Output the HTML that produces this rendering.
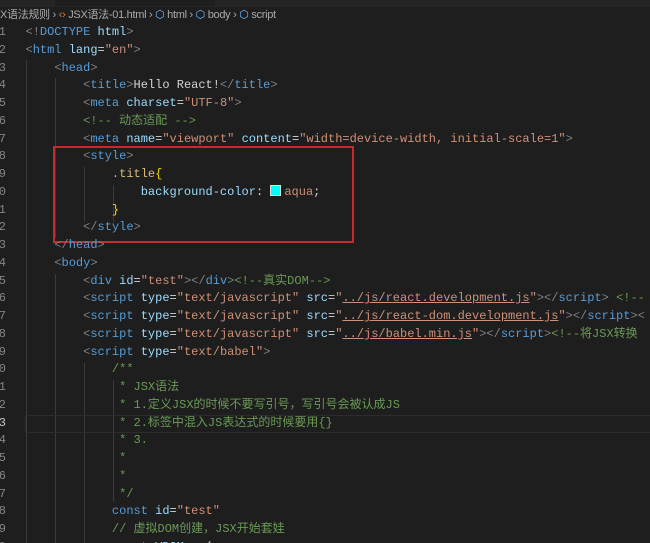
<!DOCTYPE html>
<html><head><meta charset="utf-8"><style>
html,body{margin:0;width:650px;height:543px;overflow:hidden}
body{background:#1e1e1e;position:relative;font-family:"Liberation Mono","Noto Sans CJK SC",monospace;font-size:12px;}
.top{position:absolute;left:0;top:0;width:650px;height:7px;background:#252526}
.tab{position:absolute;top:0;height:6px;left:55px;width:160px;background:#1e1e1e}
.bc{position:absolute;left:0;top:7px;height:16px;line-height:16px;font-family:"Liberation Sans","Noto Sans CJK SC",sans-serif;font-size:11px;color:#a9a9a9;white-space:nowrap;letter-spacing:-0.3px}
.l{position:absolute;left:0;margin-top:2px;height:17.75px;line-height:17.75px;white-space:pre;color:#d4d4d4}
.n{position:absolute;left:-10px;width:16px;text-align:right;color:#858585}
.c{position:absolute;left:25.5px}
.g{color:#808080}.t{color:#569cd6}.a{color:#9cdcfe}.s{color:#ce9178}.m{color:#6a9955}.y{color:#d7ba7d}.b{color:#ffd700}.u{text-decoration:underline}
.guide{position:absolute;width:1px;background:#3a3a3a}
.cur{position:absolute;left:25px;width:625px;height:16px;border:1px solid #2c2c2c;top:415px}
.box{position:absolute;left:53px;top:146px;width:297px;height:93px;border:2px solid #c42b2f}
.sw{display:inline-block;width:9px;height:9px;background:#0ff;border:1px solid #ddd;vertical-align:-1px;margin-right:3px}
</style></head><body>
<div class="top"><div class="tab"></div></div>
<div class="bc">X语法规则 › <span style="color:#e37933">‹›</span> JSX语法-01.html › <span style="color:#75beff">⬡</span> html › <span style="color:#75beff">⬡</span> body › <span style="color:#75beff">⬡</span> script</div>
<div class="guide" style="left:26px;top:60px;height:485px"></div>
<div class="guide" style="left:55px;top:78px;height:160px"></div>
<div class="guide" style="left:55px;top:274px;height:271px"></div>
<div class="guide" style="left:84px;top:167px;height:55px"></div>
<div class="guide" style="left:84px;top:363px;height:182px"></div>
<div class="guide" style="left:113px;top:185px;height:37px"></div>
<div class="guide" style="left:113px;top:380px;height:122px"></div>
<div class="cur"></div>
<div class="box"></div>

<div class="l" style="top:22px"><span class="n">1</span><span class="c"><span class="g">&lt;!</span><span class="t">DOCTYPE</span> <span class="a">html</span><span class="g">&gt;</span></span></div>
<div class="l" style="top:39.75px"><span class="n">2</span><span class="c"><span class="g">&lt;</span><span class="t">html</span> <span class="a">lang</span>=<span class="s">"en"</span><span class="g">&gt;</span></span></div>
<div class="l" style="top:57.5px"><span class="n">3</span><span class="c">    <span class="g">&lt;</span><span class="t">head</span><span class="g">&gt;</span></span></div>
<div class="l" style="top:75.25px"><span class="n">4</span><span class="c">        <span class="g">&lt;</span><span class="t">title</span><span class="g">&gt;</span>Hello React!<span class="g">&lt;/</span><span class="t">title</span><span class="g">&gt;</span></span></div>
<div class="l" style="top:93px"><span class="n">5</span><span class="c">        <span class="g">&lt;</span><span class="t">meta</span> <span class="a">charset</span>=<span class="s">"UTF-8"</span><span class="g">&gt;</span></span></div>
<div class="l" style="top:110.75px"><span class="n">6</span><span class="c">        <span class="m">&lt;!-- 动态适配 --&gt;</span></span></div>
<div class="l" style="top:128.5px"><span class="n">7</span><span class="c">        <span class="g">&lt;</span><span class="t">meta</span> <span class="a">name</span>=<span class="s">"viewport"</span> <span class="a">content</span>=<span class="s">"width=device-width, initial-scale=1"</span><span class="g">&gt;</span></span></div>
<div class="l" style="top:146.25px"><span class="n">8</span><span class="c">        <span class="g">&lt;</span><span class="t">style</span><span class="g">&gt;</span></span></div>
<div class="l" style="top:164px"><span class="n">9</span><span class="c">            <span class="y">.title</span><span class="b">{</span></span></div>
<div class="l" style="top:181.75px"><span class="n">0</span><span class="c">                <span class="a">background-color</span>: <span class="sw"></span><span class="s">aqua</span>;</span></div>
<div class="l" style="top:199.5px"><span class="n">1</span><span class="c">            <span class="b">}</span></span></div>
<div class="l" style="top:217.25px"><span class="n">2</span><span class="c">        <span class="g">&lt;/</span><span class="t">style</span><span class="g">&gt;</span></span></div>
<div class="l" style="top:235px"><span class="n">3</span><span class="c">    <span class="g">&lt;/</span><span class="t">head</span><span class="g">&gt;</span></span></div>
<div class="l" style="top:252.75px"><span class="n">4</span><span class="c">    <span class="g">&lt;</span><span class="t">body</span><span class="g">&gt;</span></span></div>
<div class="l" style="top:270.5px"><span class="n">5</span><span class="c">        <span class="g">&lt;</span><span class="t">div</span> <span class="a">id</span>=<span class="s">"test"</span><span class="g">&gt;&lt;/</span><span class="t">div</span><span class="g">&gt;</span><span class="m">&lt;!--真实DOM--&gt;</span></span></div>
<div class="l" style="top:288.25px"><span class="n">6</span><span class="c">        <span class="g">&lt;</span><span class="t">script</span> <span class="a">type</span>=<span class="s">"text/javascript"</span> <span class="a">src</span>=<span class="s">"<span class="u">../js/react.development.js</span>"</span><span class="g">&gt;&lt;/</span><span class="t">script</span><span class="g">&gt;</span> <span class="m">&lt;!--</span></span></div>
<div class="l" style="top:306px"><span class="n">7</span><span class="c">        <span class="g">&lt;</span><span class="t">script</span> <span class="a">type</span>=<span class="s">"text/javascript"</span> <span class="a">src</span>=<span class="s">"<span class="u">../js/react-dom.development.js</span>"</span><span class="g">&gt;&lt;/</span><span class="t">script</span><span class="g">&gt;&lt;</span></span></div>
<div class="l" style="top:323.75px"><span class="n">8</span><span class="c">        <span class="g">&lt;</span><span class="t">script</span> <span class="a">type</span>=<span class="s">"text/javascript"</span> <span class="a">src</span>=<span class="s">"<span class="u">../js/babel.min.js</span>"</span><span class="g">&gt;&lt;/</span><span class="t">script</span><span class="g">&gt;</span><span class="m">&lt;!--将JSX转换</span></span></div>
<div class="l" style="top:341.5px"><span class="n">9</span><span class="c">        <span class="g">&lt;</span><span class="t">script</span> <span class="a">type</span>=<span class="s">"text/babel"</span><span class="g">&gt;</span></span></div>
<div class="l" style="top:359.25px"><span class="n">0</span><span class="c m">            /**</span></div>
<div class="l" style="top:377px"><span class="n">1</span><span class="c m">             * JSX语法</span></div>
<div class="l" style="top:394.75px"><span class="n">2</span><span class="c m">             * 1.定义JSX的时候不要写引号，写引号会被认成JS</span></div>
<div class="l" style="top:412.5px"><span class="n" style="color:#c6c6c6">3</span><span class="c m">             * 2.标签中混入JS表达式的时候要用{}</span></div>
<div class="l" style="top:430.25px"><span class="n">4</span><span class="c m">             * 3.</span></div>
<div class="l" style="top:448px"><span class="n">5</span><span class="c m">             *</span></div>
<div class="l" style="top:465.75px"><span class="n">6</span><span class="c m">             *</span></div>
<div class="l" style="top:483.5px"><span class="n">7</span><span class="c m">             */</span></div>
<div class="l" style="top:501.25px"><span class="n">8</span><span class="c">            <span class="t">const</span> <span class="a">id</span>=<span class="s">"test"</span></span></div>
<div class="l" style="top:519px"><span class="n">9</span><span class="c">            <span class="m">// 虚拟DOM创建，JSX开始套娃</span></span></div>
<div class="l" style="top:536.75px"><span class="n">0</span><span class="c">            <span class="t">const</span> <span class="a">VDOM</span> = (</span></div>
</body></html>
